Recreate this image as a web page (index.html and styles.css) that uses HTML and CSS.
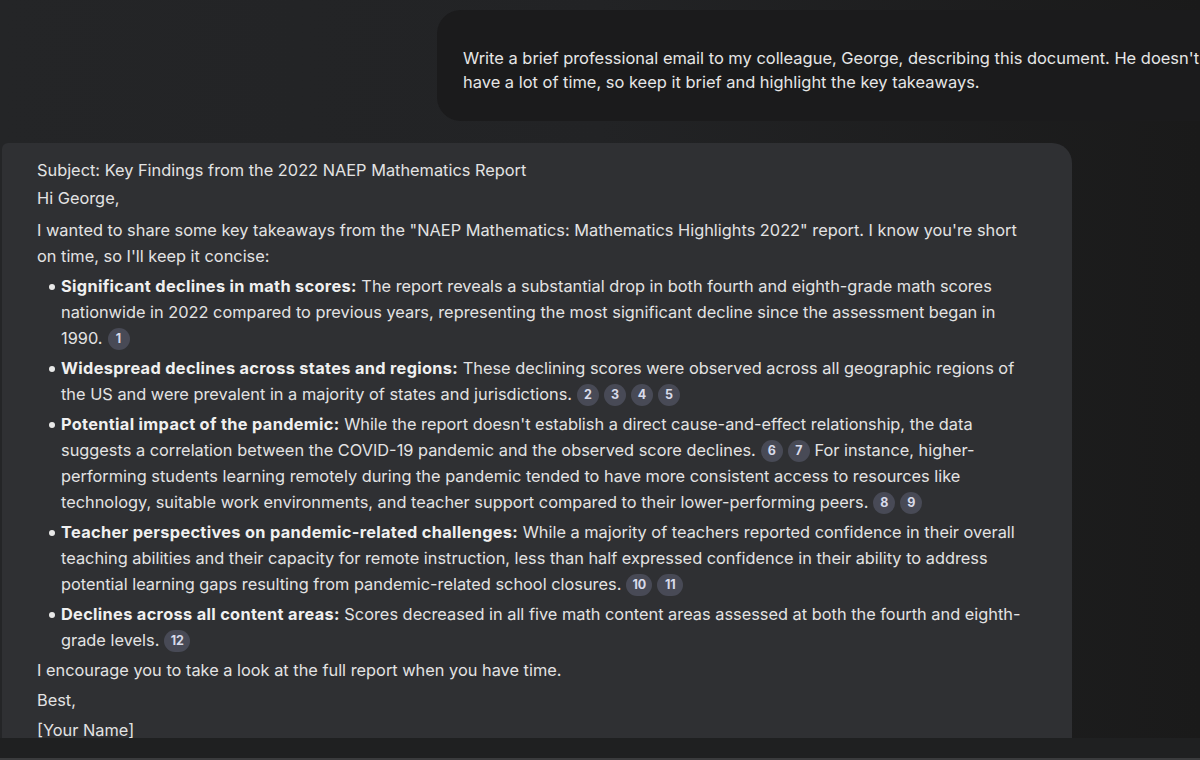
FILE: index.html
```html
<!DOCTYPE html>
<html lang="en">
<head>
<meta charset="utf-8">
<title>Email draft</title>
<link rel="stylesheet" href="styles.css">
</head>
<body>
<div class="page">
  <main class="chat">
    <div class="user-row">
      <div class="user-bubble">
        <p class="user-text">Write a brief professional email to my colleague, George, describing this document. He doesn't have a lot of time, so keep it brief and highlight the key takeaways.</p>
      </div>
    </div>
    <div class="reply">
      <p class="subject">Subject: Key Findings from the 2022 NAEP Mathematics Report</p>
      <p class="greet">Hi George,</p>
      <p>I wanted to share some key takeaways from the "NAEP Mathematics: Mathematics Highlights 2022" report. I know you're short on time, so I'll keep it concise:</p>
      <ul class="points">
        <li><b>Significant declines in math scores:</b> The report reveals a substantial drop in both fourth and eighth-grade math scores nationwide in 2022 compared to previous years, representing the most significant decline since the assessment began in 1990.<span class="cite">1</span></li>
        <li><b>Widespread declines across states and regions:</b> These declining scores were observed across all geographic regions of the US and were prevalent in a majority of states and jurisdictions.<span class="cite">2</span><span class="cite">3</span><span class="cite">4</span><span class="cite">5</span></li>
        <li><b>Potential impact of the pandemic:</b> While the report doesn't establish a direct cause-and-effect relationship, the data suggests a correlation between the COVID-19 pandemic and the observed score declines.<span class="cite">6</span><span class="cite">7</span> For instance, higher-performing students learning remotely during the pandemic tended to have more consistent access to resources like technology, suitable work environments, and teacher support compared to their lower-performing peers.<span class="cite">8</span><span class="cite">9</span></li>
        <li><b>Teacher perspectives on pandemic-related challenges:</b> While a majority of teachers reported confidence in their overall teaching abilities and their capacity for remote instruction, less than half expressed confidence in their ability to address potential learning gaps resulting from pandemic-related school closures.<span class="cite wide">10</span><span class="cite wide">11</span></li>
        <li><b>Declines across all content areas:</b> Scores decreased in all five math content areas assessed at both the fourth and eighth-grade levels.<span class="cite wide">12</span></li>
      </ul>
      <p>I encourage you to take a look at the full report when you have time.</p>
      <p>Best,</p>
      <p>[Your Name]</p>
    </div>
  </main>
  <footer class="bottom-bar"></footer>
</div>
</body>
</html>
```

FILE: styles.css
```css
* { box-sizing: border-box; }

html, body {
  margin: 0;
  padding: 0;
  height: 760px;
  overflow: hidden;
}

body {
  background: #1d1e1f;
  font-family: Inter, Roboto, "Liberation Sans", Arial, sans-serif;
  color: #e3e3e3;
}

.page {
  display: flex;
  flex-direction: column;
  height: 760px;
  background: linear-gradient(90deg, #242527 0%, #222325 50%, #1a1a1a 100%);
}

.chat {
  height: 738px;
  overflow: hidden;
  display: flex;
  flex-direction: column;
}

.user-row {
  display: flex;
  padding-left: 437px;
  padding-top: 10px;
}

.user-bubble {
  background: #1b1b1c;
  border-radius: 24px 0 0 24px;
  padding: 36px 0 27px 26px;
  width: 800px;
  flex-shrink: 0;
}

.user-text {
  margin: 0;
  width: 765px;
  font-size: 16.45px;
  line-height: 24px;
  color: #e6e6e6;
}

.reply {
  margin-top: 22px;
  margin-left: 2px;
  width: 1070px;
  flex: 1;
  background: #2f3033;
  border-radius: 6px 20px 0 0;
  padding: 14px 35px 0 35px;
  font-size: 16.35px;
  line-height: 26px;
}

.reply p {
  margin: 0 0 4px;
}

.reply .subject {
  margin-bottom: 2px;
}

.reply .greet {
  margin-bottom: 6px;
}

.points {
  list-style: none;
  margin: 0 0 4px;
  padding: 0 0 0 24px;
}

.points li {
  position: relative;
  margin-bottom: 4px;
}

.points li::before {
  content: "";
  position: absolute;
  left: -12px;
  top: 11px;
  width: 6px;
  height: 6px;
  border-radius: 50%;
  background: #e8e8e8;
}

.points b {
  font-weight: 700;
  color: #f0f0f0;
  letter-spacing: 0.32px;
}

.cite {
  display: inline-flex;
  align-items: center;
  justify-content: center;
  min-width: 22px;
  height: 22px;
  padding: 0 6px;
  border-radius: 11px;
  background: #484a56;
  color: #d8dbea;
  font-size: 12.5px;
  font-weight: 700;
  line-height: 1;
  vertical-align: 1px;
  margin-left: 5px;
}

.cite.wide {
  min-width: 26px;
  padding: 0 5px;
}

.bottom-bar {
  height: 22px;
  background: #1f2021;
  border-bottom: 2px solid #3a3b3d;
}
```
